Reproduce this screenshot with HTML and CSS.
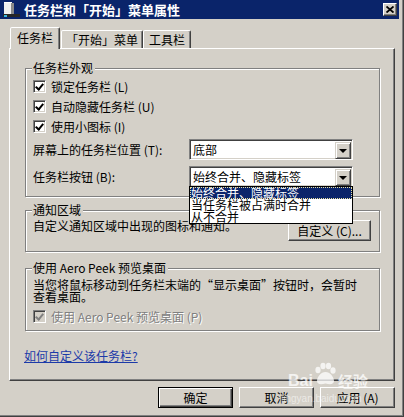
FILE: index.html
```html
<!DOCTYPE html>
<html lang="zh-CN">
<head>
<meta charset="utf-8">
<title>任务栏和「开始」菜单属性</title>
<link rel="stylesheet" href="styles.css">
</head>
<body>
<div class="window">
  <div class="titlebar">
    <svg class="app-icon" width="17" height="17" viewBox="0 0 17 17">
      <rect x="1" y="1" width="8" height="13" fill="#f0f0f0"/>
      <rect x="1" y="1" width="8" height="1" fill="#ffffff"/>
      <rect x="8" y="2" width="3" height="12" fill="#8a8a8a"/>
      <rect x="0" y="13" width="17" height="3" fill="#262626"/>
      <rect x="1" y="14" width="3" height="2" fill="#3ab6e0"/>
    </svg>
    <span class="title">任务栏和「开始」菜单属性</span>
    <div class="close">
      <svg width="8" height="7" viewBox="0 0 8 7"><path d="M0.5 0.5 L7.5 6.5 M7.5 0.5 L0.5 6.5" stroke="#000" stroke-width="1.8"/></svg>
    </div>
  </div>

  <div class="tabs">
    <div class="tab active t1">任务栏</div>
    <div class="tab t2">「开始」菜单</div>
    <div class="tab t3">工具栏</div>
  </div>

  <div class="panel">
    <div class="group g1">
      <span class="legend">任务栏外观</span>
      <div class="check"><span class="box checked"></span><span>锁定任务栏 (L)</span></div>
      <div class="check"><span class="box checked"></span><span>自动隐藏任务栏 (U)</span></div>
      <div class="check"><span class="box checked"></span><span>使用小图标 (I)</span></div>
      <div class="field f1">
        <span class="field-label">屏幕上的任务栏位置 (T):</span>
        <div class="combo"><span class="combo-text">底部</span><span class="arrow"></span></div>
      </div>
      <div class="field f2">
        <span class="field-label">任务栏按钮 (B):</span>
        <div class="combo"><span class="combo-text">始终合并、隐藏标签</span><span class="arrow"></span>
          <div class="list">
            <div class="item selected">始终合并、隐藏标签</div>
            <div class="item">当任务栏被占满时合并</div>
            <div class="item">从不合并</div>
          </div>
        </div>
      </div>
    </div>

    <div class="group g2">
      <span class="legend">通知区域</span>
      <div class="notify-row">
        <span class="notify-text">自定义通知区域中出现的图标和通知。</span>
        <div class="btn btn-custom">自定义 (C)...</div>
      </div>
    </div>

    <div class="group g3">
      <span class="legend">使用 Aero Peek 预览桌面</span>
      <p class="desc">当您将鼠标移动到任务栏末端的“显示桌面”按钮时，会暂时<br>查看桌面。</p>
      <div class="check disabled"><span class="box checked"></span><span>使用 Aero Peek 预览桌面 (P)</span></div>
    </div>

    <a class="link" href="#">如何自定义该任务栏?</a>
  </div>

  <div class="buttons">
    <div class="btn btn-main default">确定</div>
    <div class="btn btn-main">取消</div>
    <div class="btn btn-main">应用 (A)</div>
  </div>

  <div class="watermark">
    <div class="wm-logo">
      <span class="wm-bai">Bai</span>
      <svg class="wm-paw" width="24" height="24" viewBox="0 0 24 24">
        <ellipse cx="5" cy="8" rx="2.6" ry="3.2"/>
        <ellipse cx="10" cy="4" rx="2.6" ry="3.2"/>
        <ellipse cx="15.5" cy="4" rx="2.6" ry="3.2"/>
        <ellipse cx="20" cy="8.5" rx="2.6" ry="3.2"/>
        <path d="M12.5 10 C8 10 4 15 4 19 C4 22 7 23 12.5 21.5 C18 23 21 22 21 19 C21 15 17 10 12.5 10 Z"/>
      </svg>
      <span class="wm-jy">经验</span>
    </div>
    <div class="wm-url">jingyan.baidu.com</div>
  </div>
</div>
</body>
</html>
```

FILE: styles.css
```css
* { box-sizing: border-box; }

body {
  margin: 0;
  background: #d4d0c8;
  font-family: "Noto Sans CJK SC", "Noto Sans", sans-serif;
  font-size: 12px;
  color: #000;
}

.window {
  position: relative;
  width: 404px;
  height: 417px;
  background: #d4d0c8;
  box-shadow: inset -1px -1px 0 #404040, inset -2px -2px 0 #808080, inset -3px -3px 0 #d4d0c8;
  overflow: hidden;
}

/* title bar */
.titlebar {
  display: flex;
  align-items: center;
  width: 399px;
  height: 19px;
  background: #0a246a;
  padding: 0 2px 0 3px;
}
.app-icon { flex: none; display: block; }
.title {
  flex: 1;
  margin-left: 4px;
  color: #fff;
  font-weight: bold;
  font-size: 13px;
  line-height: 19px;
  white-space: nowrap;
}
.close {
  width: 14px;
  height: 13px;
  background: #d4d0c8;
  border: 1px solid;
  border-color: #fff #404040 #404040 #fff;
  box-shadow: inset -1px -1px 0 #808080;
  display: flex;
  align-items: center;
  justify-content: center;
}
.close svg { display: block; }

/* tabs */
.tabs {
  position: relative;
  z-index: 2;
  display: flex;
  align-items: flex-end;
  height: 21px;
  margin: 8px 0 0 10px;
}
.tab {
  height: 18px;
  border: 1px solid;
  border-bottom: none;
  border-color: #fff #404040 transparent #fff;
  box-shadow: inset -1px 0 0 #808080;
  border-radius: 2px 2px 0 0;
  text-align: center;
  line-height: 17px;
  white-space: nowrap;
  background: #d4d0c8;
}
.tab.active {
  height: 22px;
  margin-bottom: -1px;
  line-height: 20px;
}
.t1 { width: 50px; }
.t2 { width: 82px; margin-left: 1px; }
.t3 { width: 48px; }

/* panel */
.panel {
  margin-left: 9px;
  width: 386px;
  height: 333px;
  border: 1px solid;
  border-color: #fff #404040 #404040 #fff;
  box-shadow: inset -1px -1px 0 #808080;
  padding: 19px 0 0 15px;
}

.group {
  position: relative;
  width: 355px;
  border: 1px solid #808080;
  box-shadow: 1px 1px 0 #fff, inset 1px 1px 0 #fff;
}
.legend {
  position: absolute;
  top: -8px;
  left: 6px;
  padding: 0 2px 0 1px;
  background: #d4d0c8;
  line-height: 14px;
  white-space: nowrap;
}
.g1 { padding: 7px 7px 9px 7px; }
.g2 { margin-top: 13px; padding: 8px 8px 10px 7px; }
.g3 { margin-top: 16px; padding: 10px 7px 7px 7px; }

/* checkboxes */
.check {
  display: flex;
  align-items: center;
  height: 20px;
  white-space: nowrap;
}
.box {
  flex: none;
  position: relative;
  width: 13px;
  height: 13px;
  margin-right: 5px;
  background: #fff;
  border: 1px solid;
  border-color: #808080 #fff #fff #808080;
  box-shadow: inset 1px 1px 0 #404040, inset -1px -1px 0 #d4d0c8;
}
.box.checked::after {
  content: "";
  position: absolute;
  left: 3px;
  top: 1px;
  width: 3px;
  height: 6px;
  border: solid #000;
  border-width: 0 2px 2px 0;
  transform: rotate(40deg);
  transform-origin: center;
}
.check.disabled {
  height: 13px;
  margin-top: 7px;
  color: #808080;
  text-shadow: 1px 1px 0 #fff;
}
.check.disabled .box { background: #d4d0c8; }
.check.disabled .box.checked::after { border-color: #808080; }

/* combos */
.field {
  display: flex;
  align-items: center;
  height: 21px;
}
.f1 { margin-top: 3px; }
.f2 { margin-top: 6px; }
.field-label {
  width: 156px;
  white-space: nowrap;
}
.combo {
  position: relative;
  display: flex;
  align-items: center;
  width: 164px;
  height: 21px;
  background: #fff;
  border: 1px solid;
  border-color: #808080 #fff #fff #808080;
  box-shadow: inset 1px 1px 0 #404040, inset -1px -1px 0 #d4d0c8;
  padding: 0 1px 0 3px;
}
.combo-text {
  flex: 1;
  line-height: 17px;
  white-space: nowrap;
}
.arrow {
  flex: none;
  width: 16px;
  height: 17px;
  margin-top: 1px;
  background: #d4d0c8;
  border: 1px solid;
  border-color: #d4d0c8 #404040 #404040 #d4d0c8;
  box-shadow: inset 1px 1px 0 #fff, inset -1px -1px 0 #808080;
  display: flex;
  align-items: center;
  justify-content: center;
}
.arrow::before {
  content: "";
  border-left: 4px solid transparent;
  border-right: 4px solid transparent;
  border-top: 4px solid #000;
  margin-top: 1px;
}

.list {
  position: absolute;
  z-index: 5;
  top: 19px;
  left: -1px;
  width: 164px;
  background: #fff;
  border: 1px solid #000;
}
.item {
  height: 12px;
  line-height: 12px;
  padding-left: 1px;
  white-space: nowrap;
}
.item.selected {
  background: #0a246a;
  color: #fff;
  outline: 1px dotted #e8e0a0;
  outline-offset: -1px;
}

/* notification area */
.notify-row {
  display: flex;
  align-items: flex-start;
}
.notify-text {
  flex: 1;
  line-height: 14px;
  white-space: nowrap;
}

.desc {
  margin: 0;
  line-height: 12px;
  white-space: nowrap;
}

/* buttons */
.btn {
  display: flex;
  align-items: center;
  justify-content: center;
  height: 21px;
  background: #d4d0c8;
  border: 1px solid;
  border-color: #fff #404040 #404040 #fff;
  box-shadow: inset -1px -1px 0 #808080;
  white-space: nowrap;
}
.btn-custom {
  width: 83px;
  margin-top: 1px;
}
.btn.default {
  border-color: #000;
  box-shadow: inset 1px 1px 0 #fff, inset -1px -1px 0 #404040, inset -2px -2px 0 #808080;
}

.link {
  display: inline-block;
  margin: 18px 0 0 -1px;
  line-height: 14px;
  color: #1c3aa8;
  text-decoration: underline;
}

.buttons {
  display: flex;
  justify-content: flex-end;
  gap: 6px;
  margin-top: 6px;
  padding-right: 9px;
}
.btn-main { width: 75px; }

/* watermark */
.watermark {
  position: absolute;
  left: 281px;
  top: 362px;
  color: rgba(255, 255, 255, 0.75);
  pointer-events: none;
}
.wm-logo {
  display: flex;
  align-items: flex-end;
  height: 28px;
}
.wm-bai {
  font-family: "Liberation Sans", sans-serif;
  font-weight: bold;
  font-size: 16px;
  line-height: 18px;
  margin-left: 7px;
}
.wm-paw {
  fill: rgba(255, 255, 255, 0.75);
  margin: 0 1px 0 0;
  align-self: flex-start;
}
.wm-jy {
  font-size: 15px;
  line-height: 18px;
  font-weight: bold;
}
.wm-url {
  font-family: "Liberation Sans", sans-serif;
  font-size: 10px;
  line-height: 12px;
  margin-top: 3px;
  color: rgba(255, 255, 255, 0.55);
}
```
